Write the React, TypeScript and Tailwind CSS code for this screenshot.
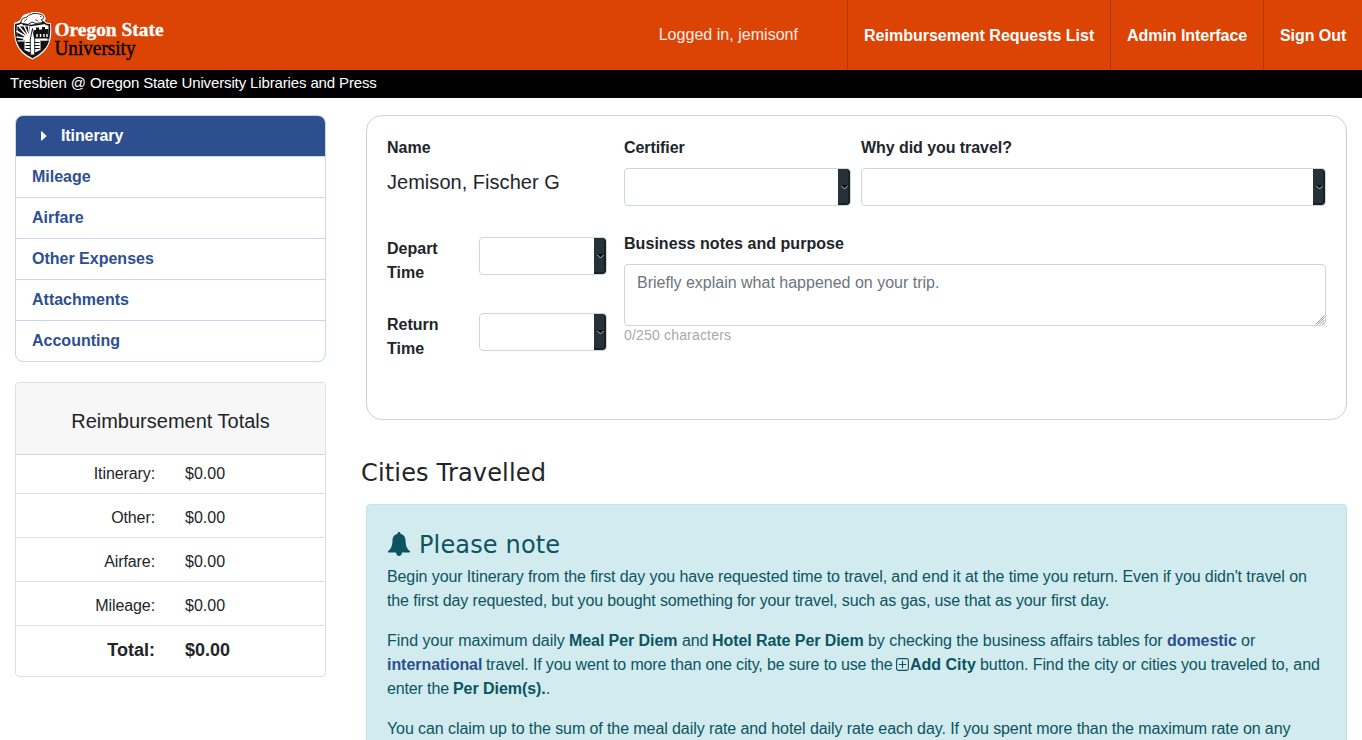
import type { ReactNode } from "react";

const navLinks = [
  { label: "Reimbursement Requests List", className: "w-[263px]" },
  { label: "Admin Interface", className: "w-[153px] tracking-[-0.05px]" },
  { label: "Sign Out", className: "w-[99px] tracking-[-0.05px]" },
];
const sections = ["Itinerary", "Mileage", "Airfare", "Other Expenses", "Attachments", "Accounting"];
const totals = [
  { label: "Itinerary:", value: "$0.00" },
  { label: "Other:", value: "$0.00" },
  { label: "Airfare:", value: "$0.00" },
  { label: "Mileage:", value: "$0.00" },
];

function Crest() {
  return (
    <svg width="160" height="56" viewBox="0 0 160 56" className="block" role="img" aria-label="Oregon State University">
      {/* shield */}
      <path d="M2.300 12.500 C6 12.500 8.500 10 9.500 7.500 C12 3 17 4 20 2 C24 2 31 1.500 33 6.500 C34.500 9 33 10 32.500 11.500 C35 12.500 37 13 38.800 13 C40.500 29 38.500 41 20.500 49.500 C3.500 42 1 29 2.300 12.500 Z" fill="#fff" />
      <path d="M4 14.500 C8 14.500 10 12.500 11.500 11 L31 12 C33 14 35 14.800 37.300 14.800 C38 28 36.500 39 20.500 47.300 C5 40 3 28 4 14.500 Z" fill="#fff" stroke="#111" strokeWidth="1.7" />
      {/* beaver */}
      <path d="M9 13 C9 8 12 8 15 7 C17 4 19 5 21 3.500 C25 3.500 26 3.500 29 4.500 C33 6 32 9 29.500 9.500 L31 12.500 L24 13.500 L20 12 L16 14.500 Z" fill="#fff" stroke="#111" strokeWidth="0.9" />
      <path d="M12 11.500 L15 9 M23 9.500 L26 11 M28 6.500 h1.500" stroke="#222" strokeWidth="0.8" fill="none" />
      <path d="M10.500 14.500 L19 15.500 L32 13.500" stroke="#111" strokeWidth="1.6" fill="none" />
      {/* sun rays */}
      <path d="M5.500 16.500 H18 V30 H5 Z" fill="#111" />
      <path d="M18 29 L7 16.500 M18 29 L4.500 21 M18 29 L4.500 27 M18 29 L12 15.500 M18 29 L16.500 15.500" stroke="#fff" strokeWidth="1.5" />
      <path d="M11 30.500 A6 6 0 0 1 18 24.500 L18 30.500 Z" fill="#fff" />
      {/* building */}
      <path d="M22 20 L24 20 V17.500 H27 V19.500 H30 V17 H33 V19 H36.500 L36.500 28.500 L22 28.500 Z" fill="#111" />
      <path d="M25 24 v3 M28.500 24 v3 M32 24 v3 M35 24 v3" stroke="#fff" strokeWidth="1.4" />
      {/* lower fields */}
      <path d="M5 30.500 H37 C35 38.500 29 43 20.500 46.500 C12 43 6.500 38 5 30.500 Z" fill="#111" />
      <path d="M12.500 30 H28.500 V40 L20.500 43.500 L12.500 40 Z" fill="#fff" />
      <path d="M13.500 32.500 H19 M13.500 35.500 H19 M13.500 38.500 H19 M22 32.500 H27.500 M22 35.500 H27.500 M22 38.500 H27.500" stroke="#111" strokeWidth="1.1" />
      <path d="M20.500 18.500 L22.700 29 V45 H18.300 V29 Z" fill="#fff" stroke="#111" strokeWidth="0.9" />
      <path d="M5.500 31 H12 M29 30 H37" stroke="#fff" strokeWidth="1" />
      <text x="42.500" y="26" textLength="109" lengthAdjust="spacingAndGlyphs" stroke="#fff" strokeWidth="0.3" className="fill-white font-['Liberation_Serif',serif] text-[19px] font-bold">Oregon State</text>
      <text x="42.500" y="44.500" textLength="81" lengthAdjust="spacingAndGlyphs" stroke="#000" strokeWidth="0.4" className="fill-black font-['Liberation_Serif',serif] text-[20px]">University</text>
    </svg>
  );
}

function SelectBox({ label }: { label: string }) {
  return (
    <div role="combobox" aria-label={label} aria-expanded="false" className="flex h-[38px] w-full justify-end overflow-hidden rounded border border-[#ced4da] bg-white">
      <div className="flex w-3 justify-center rounded-r-[3px] border-r-2 border-b-2 border-[#1a2126] bg-[#273238]">
        <svg width="7" height="5" viewBox="0 0 7 5" className="ml-[2px] mt-4 shrink-0">
          <path d="M0.500 0 H6.500 L3.500 3.500 Z" fill="#000" />
          <path d="M0.300 0.800 L3.500 4 L6.700 0.800" fill="none" stroke="#d8dadb" strokeWidth="0.8" />
        </svg>
      </div>
    </div>
  );
}

function Field({ label, className = "", children }: { label: string; className?: string; children: ReactNode }) {
  return (
    <div className={className}>
      <div className="mb-2 font-bold">{label}</div>
      {children}
    </div>
  );
}

function TimeField({ first }: { first: string }) {
  return (
    <div className="flex h-[76px] items-start">
      <div className="w-[92px] font-bold">
        <div>{first}</div>
        <div>Time</div>
      </div>
      <div className="w-32">
        <SelectBox label={`${first} Time`} />
      </div>
    </div>
  );
}

function Line({ className = "", children }: { className?: string; children: ReactNode }) {
  return <span className={`flex h-6 whitespace-pre ${className}`}>{children}</span>;
}

export default function App() {
  return (
    <div className="h-[740px] overflow-hidden bg-white font-['Liberation_Sans',Arial,sans-serif] text-base leading-6 text-[#212529]">
      <header className="flex h-[70px] bg-[#dc4405] text-white">
        <div className="pl-3 pt-[10px]">
          <Crest />
        </div>
        <div className="ml-auto flex">
          <span className="mr-[49px] pt-[23px] tracking-[0.03px] text-white/90">Logged in, jemisonf</span>
          {navLinks.map((link) => (
            <a key={link.label} className={`flex h-full items-center whitespace-nowrap border-l border-[#b03604] pl-4 pt-px font-bold ${link.className}`}>
              {link.label}
            </a>
          ))}
        </div>
      </header>
      <div className="h-7 bg-black pl-[10px] text-[15px] leading-[26px] tracking-[-0.135px] text-white">
        Tresbien @ Oregon State University Libraries and Press
      </div>

      <div className="flex items-start px-[15px] pt-[17px]">
        <aside className="w-[311px] shrink-0">
          <nav className="overflow-hidden rounded-lg border border-[#c8d6ef]">
            {sections.map((section, i) =>
              i === 0 ? (
                <a key={section} className="flex h-10 items-center bg-[#2d4f90] pl-[25px] font-bold tracking-[-0.1px] text-white">
                  <svg width="6" height="10" viewBox="0 0 6 10" className="mr-[14px]">
                    <path d="M0 0.800 Q0 0 0.800 0.500 L5.200 4.500 Q5.600 5 5.200 5.400 L0.800 9.400 Q0 9.900 0 9.100 Z" fill="currentColor" />
                  </svg>
                  {section}
                </a>
              ) : (
                <a key={section} className="flex h-[41px] items-center border-t border-[#c8d6ef] pl-4 font-bold text-[#2d4f90]">
                  {section}
                </a>
              ),
            )}
          </nav>

          <section className="mt-5 h-[295px] overflow-hidden rounded border border-[#dfdfdf]">
            <h2 className="h-[72px] border-b border-[#d9d9d9] bg-[#f7f7f7] pt-[23px] text-center text-xl leading-[30px]">
              Reimbursement Totals
            </h2>
            {totals.map((row, i) => (
              <div key={row.label} className={`flex items-end border-b border-[#dfdfdf] pb-[7px] ${i === 0 ? "h-[39px]" : "h-11"}`}>
                <span className="w-[139px] text-right tracking-[-0.1px]">{row.label}</span>
                <span className="ml-[30px]">{row.value}</span>
              </div>
            ))}
            <div className="flex h-12 items-center text-lg font-bold">
              <span className="w-[139px] text-right">Total:</span>
              <span className="ml-[30px]">$0.00</span>
            </div>
          </section>
        </aside>

        <main className="ml-[35px] min-w-0 flex-1">
          <section className="ml-[5px] h-[305px] rounded-2xl border border-[#ced0d2] p-5">
            <div className="grid grid-cols-[227px_227px_1fr] gap-x-2.5">
              <Field label="Name">
                <div className="-mt-px text-xl leading-[30px] tracking-[0.03px]">Jemison, Fischer G</div>
              </Field>
              <Field label="Certifier" className="tracking-[-0.08px]">
                <SelectBox label="Certifier" />
              </Field>
              <Field label="Why did you travel?" className="tracking-[-0.06px]">
                <SelectBox label="Why did you travel?" />
              </Field>
            </div>
            <div className="mt-[26px] grid grid-cols-[227px_1fr] gap-x-2.5">
              <div className="pt-[5px]">
                <TimeField first="Depart" />
                <TimeField first="Return" />
              </div>
              <Field label="Business notes and purpose" className="tracking-[0.05px]">
                <div className="relative">
                  <textarea
                    rows={2}
                    placeholder="Briefly explain what happened on your trip."
                    className="block h-[62px] w-full resize-none rounded border border-[#ced4da] px-3 py-1.5 tracking-normal placeholder:text-[#6c757d]"
                  />
                  <svg width="10" height="10" viewBox="0 0 10 10" className="absolute right-px bottom-px">
                    <path d="M0.500 9.500 L9.500 0.500 M2.500 9.500 L9.500 2.500 M5 9.500 L9.500 5 M7.500 9.500 L9.500 7.500" stroke="#8d8d8d" strokeWidth="0.9" />
                  </svg>
                </div>
                <div className="text-sm leading-[19px] tracking-[0.18px] text-[#a9a9a9]">0/250 characters</div>
              </Field>
            </div>
          </section>

          <h2 className="mt-[39px] font-['DejaVu_Sans',sans-serif] text-2xl leading-[29px] tracking-[0.17px]">Cities Travelled</h2>

          <section className="ml-[5px] mt-4 rounded border border-[#bee5eb] bg-[#d1ebef] pl-5 pt-[25px] text-[#0c5460]">
            <h3 className="mb-[5px] flex items-start font-['DejaVu_Sans',sans-serif] text-2xl leading-[29px] tracking-[0.15px]">
              <svg width="24" height="24" viewBox="0 0 24 24" className="mr-2 mt-0.5" aria-hidden="true">
                <path
                  d="M12 0 C12.900 0 13.600 0.700 13.400 1.700 C17 2.500 18.500 5.500 18.500 8.500 C18.700 14 20 17 23.200 19.500 C23.200 20.200 22.500 20.600 21.600 20.600 H15 C14.800 22.700 13.700 24 12 24 C10.300 24 9.200 22.700 9 20.600 H2.400 C1.500 20.600 0.800 20.200 0.800 19.500 C4 17 5.300 14 5.500 8.500 C5.500 5.500 7 2.500 10.600 1.700 C10.400 0.700 11.100 0 12 0 Z"
                  fill="currentColor"
                />
              </svg>
              <span className="pt-px">Please note</span>
            </h3>
            <p className="mb-4">
              <Line className="tracking-[-0.105px]">
                Begin your Itinerary from the first day you have requested time to travel, and end it at the time you return. Even if you didn't travel on
              </Line>
              <Line className="tracking-[-0.115px]">
                the first day requested, but you bought something for your travel, such as gas, use that as your first day.
              </Line>
            </p>
            <p className="mb-4">
              <Line>
                <span className="w-[182px]">Find your maximum daily</span>
                <b className="w-[113px] tracking-[-0.08px]">Meal Per Diem</b>
                <span className="w-[30px] tracking-[-0.1px]">and</span>
                <b className="w-[156px] tracking-[-0.07px]">Hotel Rate Per Diem</b>
                <span className="w-[299px] tracking-[-0.05px]">by checking the business affairs tables for</span>
                <a className="w-[74px] font-bold tracking-[-0.05px] text-[#2d4f90]">domestic</a>
                <span>or</span>
              </Line>
              <Line>
                <a className="w-[99px] font-bold tracking-[-0.05px] text-[#2d4f90]">international</a>
                <span className="w-[410px] tracking-[-0.14px]">travel. If you went to more than one city, be sure to use the</span>
                <svg width="13" height="13" viewBox="0 0 13 13" className="mr-px mt-[5px]" aria-hidden="true">
                  <path d="M2.500 0.600 H10.500 Q12.400 0.600 12.400 2.500 V10.500 Q12.400 12.400 10.500 12.400 H2.500 Q0.600 12.400 0.600 10.500 V2.500 Q0.600 0.600 2.500 0.600 Z M6.500 2.800 V10.200 M2.800 6.500 H10.200" fill="none" stroke="currentColor" strokeWidth="1.1" />
                </svg>
                <b className="w-[70px]">Add City</b>
                <span className="tracking-[-0.085px]">button. Find the city or cities you traveled to, and</span>
              </Line>
              <Line>
                <span className="w-[66px] tracking-[-0.14px]">enter the</span>
                <b className="tracking-[-0.05px]">Per Diem(s).</b>
                <span>.</span>
              </Line>
            </p>
            <p className="mb-4">
              <Line className="tracking-[-0.085px]">
                You can claim up to the sum of the meal daily rate and hotel daily rate each day. If you spent more than the maximum rate on any
              </Line>
            </p>
          </section>
        </main>
      </div>
    </div>
  );
}
